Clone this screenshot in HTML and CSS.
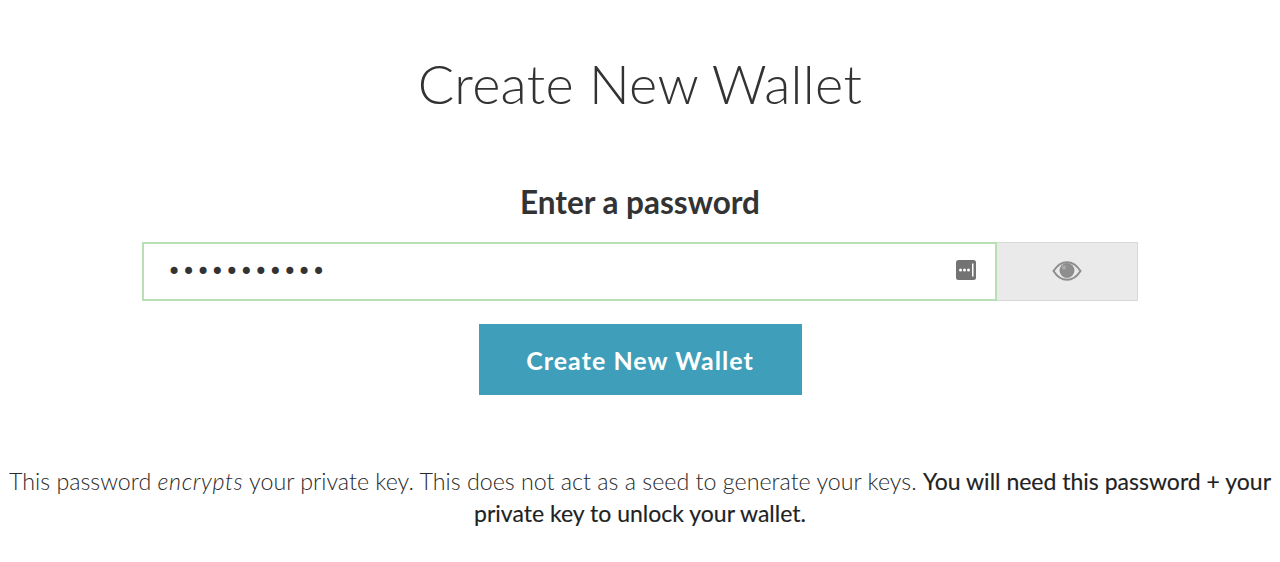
FILE: index.html
```html
<!DOCTYPE html>
<html lang="en">
<head>
    <meta charset="UTF-8">
    <title>Create New Wallet</title>
    <link rel="stylesheet" href="styles.css">
</head>
<body>
    <div class="container">
        <h1>Create New Wallet</h1>
        <h4>Enter a password</h4>

        <div class="input-group">
            <div class="password-field">
                <span class="dots">•••••••••••</span>
                <svg class="key-icon" width="20" height="20" viewBox="0 0 20 20">
                    <rect width="20" height="20" rx="2.5" fill="#737373"/>
                    <circle cx="4.5" cy="10" r="1.5" fill="#fff"/>
                    <circle cx="8.500" cy="10" r="1.5" fill="#fff"/>
                    <circle cx="12.500" cy="10" r="1.5" fill="#fff"/>
                    <rect x="16" y="3.500" width="1.500" height="13" fill="#fff"/>
                </svg>
            </div>
            <div class="eye-btn">
                <svg width="30" height="20" viewBox="0 0 30 20">
                    <path d="M1.500 10C5 4.500 9.500 1.200 15 1.200S25 4.500 28.500 10C25 15.500 20.500 18.800 15 18.800S5 15.500 1.500 10Z" fill="none" stroke="#8e8e8e" stroke-width="2"/>
                    <circle cx="15" cy="9.500" r="7.500" fill="#8e8e8e"/>
                    <circle cx="12" cy="6.500" r="2.200" fill="#a8a8a8"/>
                </svg>
            </div>
        </div>

        <button class="create-btn">Create New Wallet</button>

        <p class="note">This password <em>encrypts</em> your private key. This does not act as a seed to generate your keys. <strong>You will need this password + your private key to unlock your wallet.</strong></p>
    </div>
</body>
</html>
```

FILE: styles.css
```css
* {
    margin: 0;
    padding: 0;
    box-sizing: border-box;
}

body {
    font-family: Lato, "Open Sans", sans-serif;
    background: #fff;
    color: #333;
    height: 562px;
    overflow: hidden;
}

.container {
    display: flex;
    flex-direction: column;
    align-items: center;
    padding-top: 49px;
}

h1 {
    font-size: 54px;
    font-weight: 300;
    line-height: 70px;
    letter-spacing: 0.3px;
    margin-bottom: 64px;
}

h4 {
    font-size: 31.5px;
    font-weight: 700;
    line-height: 38px;
    margin-bottom: 21px;
}

.input-group {
    display: flex;
    width: 996px;
    height: 59px;
    margin-bottom: 23px;
}

.password-field {
    flex: 1;
    display: flex;
    align-items: center;
    justify-content: space-between;
    border: 2px solid #b9e0b4;
    padding: 0 19px 0 23px;
}

.dots {
    font-family: "DejaVu Sans", sans-serif;
    font-size: 24px;
    line-height: 24px;
    letter-spacing: 0.3px;
    color: #333;
}

.key-icon {
    display: block;
    margin-bottom: 4px;
}

.eye-btn {
    width: 141px;
    display: flex;
    align-items: center;
    justify-content: center;
    background: #eaeaea;
    border: 1px solid #d8d8d8;
    border-left: none;
    padding-bottom: 2px;
}

.create-btn {
    width: 323px;
    height: 71px;
    border: none;
    background: #3f9fba;
    color: #fff;
    font-family: inherit;
    font-size: 25px;
    font-weight: 700;
    letter-spacing: 1.05px;
    margin-bottom: 70px;
}

.note {
    font-size: 23.25px;
    font-weight: 300;
    line-height: 32px;
    text-align: center;
    color: #2a2a2a;
    width: 1280px;
    padding: 0 8px;
}

.note em {
    letter-spacing: 0.6px;
}

.note strong {
    font-size: 23px;
    font-weight: 400;
    color: #222;
    -webkit-text-stroke: 0.15px #222;
}
```
